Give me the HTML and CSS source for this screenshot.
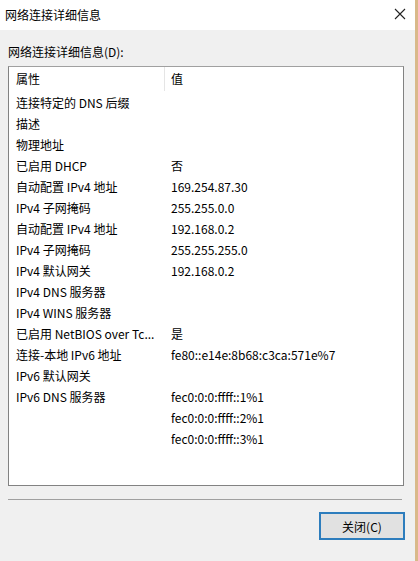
FILE: index.html
```html
<!DOCTYPE html>
<html>
<head>
    <title>网络连接详细信息</title>
    <link rel="stylesheet" href="styles.css">
</head>
<body>
    <div class="window">
        <div class="title-bar">
            <span class="title">网络连接详细信息</span>
            <svg class="close-icon" width="12" height="12" viewBox="0 0 12 12">
                <path d="M1 1 L11 11 M11 1 L1 11" stroke="#222" stroke-width="1.1" fill="none"/>
            </svg>
        </div>
        <div class="content">
            <div class="label">网络连接详细信息(D):</div>
            <div class="list-box">
                <div class="list-head">
                    <div class="col-prop">属性</div>
                    <div class="col-value">值</div>
                </div>
                <div class="row"><div class="col-prop">连接特定的 DNS 后缀</div><div class="col-value faint">&nbsp;</div></div>
                <div class="row"><div class="col-prop">描述</div><div class="col-value faint">&nbsp;</div></div>
                <div class="row"><div class="col-prop">物理地址</div><div class="col-value faint">&nbsp;</div></div>
                <div class="row"><div class="col-prop">已启用 DHCP</div><div class="col-value">否</div></div>
                <div class="row"><div class="col-prop">自动配置 IPv4 地址</div><div class="col-value">169.254.87.30</div></div>
                <div class="row"><div class="col-prop">IPv4 子网掩码</div><div class="col-value">255.255.0.0</div></div>
                <div class="row"><div class="col-prop">自动配置 IPv4 地址</div><div class="col-value">192.168.0.2</div></div>
                <div class="row"><div class="col-prop">IPv4 子网掩码</div><div class="col-value">255.255.255.0</div></div>
                <div class="row"><div class="col-prop">IPv4 默认网关</div><div class="col-value">192.168.0.2</div></div>
                <div class="row"><div class="col-prop">IPv4 DNS 服务器</div><div class="col-value"></div></div>
                <div class="row"><div class="col-prop">IPv4 WINS 服务器</div><div class="col-value"></div></div>
                <div class="row"><div class="col-prop">已启用 NetBIOS over Tc...</div><div class="col-value">是</div></div>
                <div class="row"><div class="col-prop">连接-本地 IPv6 地址</div><div class="col-value">fe80::e14e:8b68:c3ca:571e%7</div></div>
                <div class="row"><div class="col-prop">IPv6 默认网关</div><div class="col-value"></div></div>
                <div class="row"><div class="col-prop">IPv6 DNS 服务器</div><div class="col-value">fec0:0:0:ffff::1%1</div></div>
                <div class="row"><div class="col-prop"></div><div class="col-value">fec0:0:0:ffff::2%1</div></div>
                <div class="row"><div class="col-prop"></div><div class="col-value">fec0:0:0:ffff::3%1</div></div>
            </div>
            <div class="separator"></div>
            <div class="buttons">
                <button class="close-button">关闭(C)</button>
            </div>
        </div>
    </div>
</body>
</html>
```

FILE: styles.css
```css
body {
    margin: 0;
    background-color: #d9b98a;
    font-family: "Noto Sans CJK SC", "Noto Sans", sans-serif;
    font-size: 12px;
    color: #000;
}
.window {
    width: 415px;
    height: 561px;
    background-color: #f0f0f0;
    display: flex;
    flex-direction: column;
}
.title-bar {
    height: 30px;
    background-color: #fff;
    display: flex;
    align-items: center;
    justify-content: space-between;
    padding: 0 9px 0 5px;
    box-sizing: border-box;
}
.title {
    font-size: 12px;
    margin-top: -2px;
}
.close-icon {
    margin-top: -2px;
}
.content {
    padding: 0 11px 0 8px;
    flex: 1;
    display: flex;
    flex-direction: column;
}
.label {
    height: 36px;
    line-height: 16px;
    padding-top: 14px;
    box-sizing: border-box;
}
.list-box {
    height: 420px;
    box-sizing: border-box;
    background-color: #fff;
    border: 1px solid #828282;
    border-top-color: #a0a0a0;
}
.list-head {
    display: flex;
    height: 24px;
    line-height: 23px;
    margin-bottom: 1px;
}
.list-head .col-prop {
    border-right: 1px solid #e5e5e5;
    width: 148px;
}
.row {
    display: flex;
    height: 21px;
    line-height: 21px;
}
.col-prop {
    width: 149px;
    padding-left: 7px;
    white-space: nowrap;
    overflow: hidden;
}
.col-value {
    padding-left: 6px;
    white-space: nowrap;
}
.faint {
    color: #eee;
}
.separator {
    margin-top: 13px;
    height: 1px;
    background-color: #a0a0a0;
    margin-right: 2px;
}
.buttons {
    display: flex;
    justify-content: flex-end;
    padding-top: 12px;
}
.close-button {
    width: 86px;
    height: 28px;
    margin-right: -1px;
    background-color: #e1e1e1;
    border: 2px solid #2d7dbd;
    font-family: "Noto Sans CJK SC", "Noto Sans", sans-serif;
    font-size: 12px;
    color: #000;
    padding: 0;
}
```
